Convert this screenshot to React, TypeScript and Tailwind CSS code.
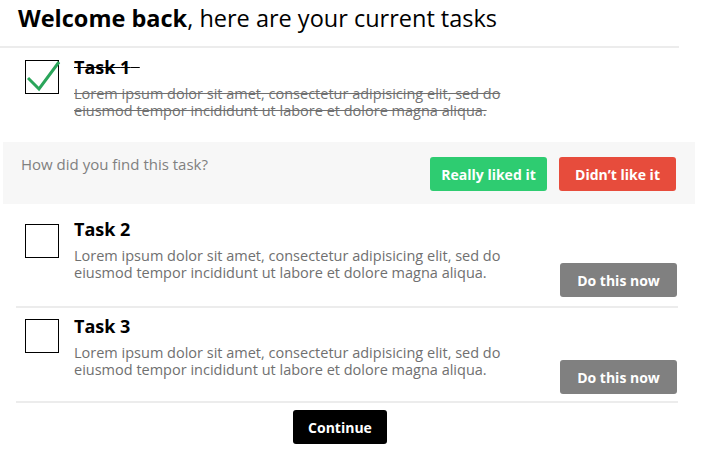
import React from "react";

const LOREM1 = "Lorem ipsum dolor sit amet, consectetur adipisicing elit, sed do";
const LOREM2 = "eiusmod tempor incididunt ut labore et dolore magna aliqua.";

function Box({ checked }: { checked?: boolean }) {
  return (
    <div className="relative w-[34px] h-[34px] border border-black shrink-0 bg-white">
      {checked && (
        <svg className="absolute left-[1px] top-[-2px]" width="36" height="34" viewBox="0 0 36 34">
          <path d="M1 19 L12 30 L32 3" fill="none" stroke="#2aa55a" strokeWidth="3" strokeLinecap="butt" strokeLinejoin="miter" />
        </svg>
      )}
    </div>
  );
}

function Task({ n, done, boxTop }: { n: number; done?: boolean; boxTop: string }) {
  return (
    <div className="flex items-start pl-[25px]">
      <div className={boxTop}>
        <Box checked={done} />
      </div>
      <div className="ml-[15px]">
        <div className={"text-[18px] font-bold text-black leading-[24px] " + (done ? "line-through" : "")}>
          Task {n}
          {done ? "\u00a0\u00a0" : ""}
        </div>
        <div className={"text-[14.5px] text-[#707070] leading-[17px] mt-[6px] " + (done ? "line-through" : "")}>
          <div className="h-[17px]">{LOREM1}</div>
          <div className="h-[17px]">{LOREM2}</div>
        </div>
      </div>
    </div>
  );
}

function TodoRow({ n, btnTop, boxTop }: { n: number; btnTop: string; boxTop: string }) {
  return (
    <div className="flex items-start justify-between pr-[27px]">
      <Task n={n} boxTop={boxTop} />
      <button className={"w-[117px] h-[34px] rounded-[3px] bg-[#808080] text-white font-bold text-[14px] " + btnTop}>Do this now</button>
    </div>
  );
}

function Sep() {
  return <div className="ml-[16px] w-[662px] h-[2px] bg-[#ececec]" />;
}

export default function App() {
  return (
    <div className="w-[704px] h-[463px] bg-white overflow-hidden" style={{ fontFamily: '"Open Sans", sans-serif' }}>
      <div className="w-[679px] h-[48px] border-b-2 border-[#ececec] pl-[18px] pt-[2px]">
        <h1 className="text-[23.5px] text-black leading-[33px]">
          <span className="font-bold">Welcome back</span>, here are your current tasks
        </h1>
      </div>
      <div className="pt-[7px] pb-[23px]">
        <Task n={1} done boxTop="pt-[5px]" />
      </div>
      <div className="mx-[3px] w-[692px] h-[62px] bg-[#f7f7f7] flex justify-between">
        <div className="pl-[18px] pt-[11px] text-[15px] text-[#808080]">How did you find this task?</div>
        <div className="flex gap-[12px] pt-[15px] pr-[19px]">
          <button className="w-[117px] h-[34px] rounded-[3px] bg-[#2ecc71] text-white font-bold text-[14px]">Really liked it</button>
          <button className="w-[117px] h-[34px] rounded-[3px] bg-[#e74c3c] text-white font-bold text-[14px]">Didn’t like it</button>
        </div>
      </div>
      <div className="pt-[13px] pb-[9px]">
        <TodoRow n={2} btnTop="mt-[46px]" boxTop="pt-[7px]" />
      </div>
      <Sep />
      <div className="pt-[6px] pb-[7px]">
        <TodoRow n={3} btnTop="mt-[46px]" boxTop="pt-[5px]" />
      </div>
      <Sep />
      <div className="flex justify-center pt-[7px] pl-[16px] w-[678px]">
        <button className="w-[94px] h-[34px] rounded-[3px] bg-black text-white font-bold text-[14px] -ml-[14px]">Continue</button>
      </div>
    </div>
  );
}
